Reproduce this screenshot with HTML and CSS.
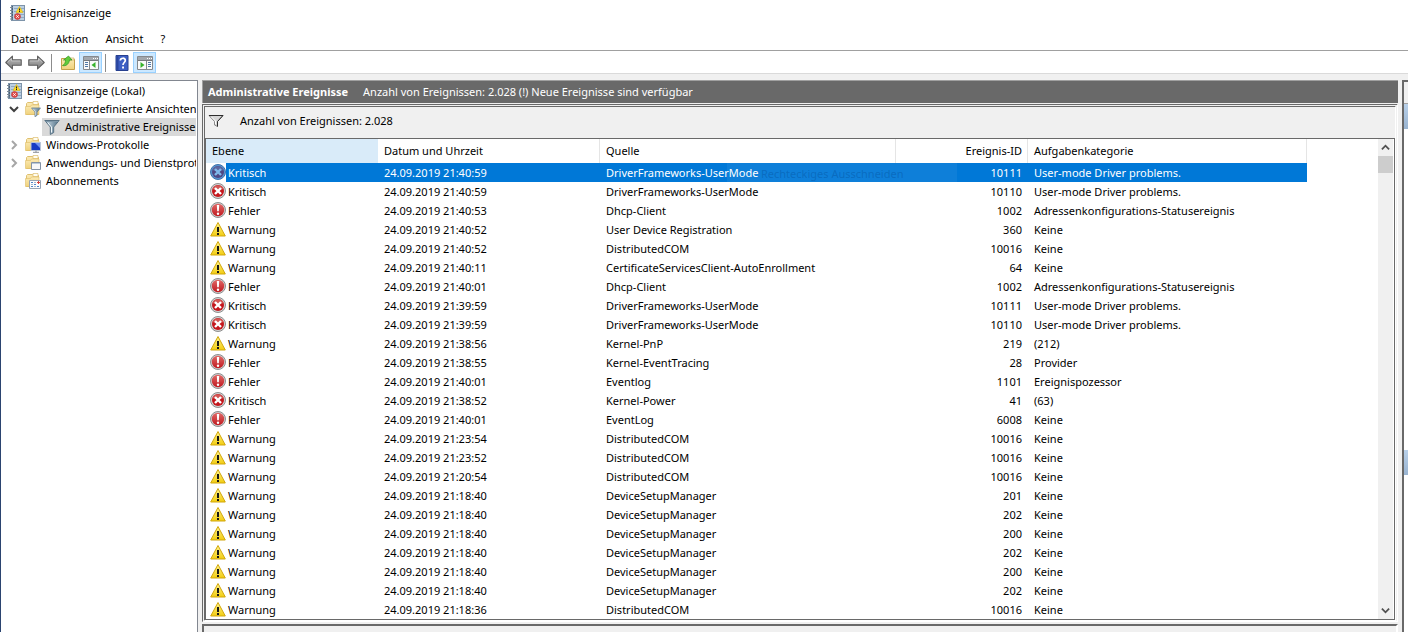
FILE: index.html
```html
<!DOCTYPE html>
<html lang="de">
<head>
    <meta charset="UTF-8">
    <meta name="viewport" content="width=device-width, initial-scale=1.0">
    <title>Ereignisanzeige</title>
    <link rel="stylesheet" href="styles.css">
</head>
<body>
    <svg class="sprite" aria-hidden="true">
        <defs>
            <linearGradient id="gYellow" x1="0" y1="0" x2="0" y2="1"><stop offset="0" stop-color="#fff48c"/><stop offset="1" stop-color="#f2cc10"/></linearGradient>
            <linearGradient id="gRed" x1="0" y1="0" x2="0" y2="1"><stop offset="0" stop-color="#e06a68"/><stop offset="1" stop-color="#c0181e"/></linearGradient>
            <linearGradient id="gFolder" x1="0" y1="0" x2="0" y2="1"><stop offset="0" stop-color="#fbeab5"/><stop offset="1" stop-color="#f0d27c"/></linearGradient>
            <linearGradient id="gArrow" x1="0" y1="0" x2="0" y2="1"><stop offset="0" stop-color="#bdbdbd"/><stop offset="1" stop-color="#7d7d7d"/></linearGradient>
            <linearGradient id="gFunnel" x1="0" y1="0" x2="1" y2="0"><stop offset="0" stop-color="#d3e2ec"/><stop offset="1" stop-color="#4d6d84"/></linearGradient>
        </defs>
        <symbol id="log" viewBox="0 0 16 16">
            <rect x="2.5" y="0.5" width="13" height="15" fill="#bccfe2" stroke="#7d93a9"/>
            <path d="M5 3.5h10M5 6.500h10M5 9.500h10M5 12.500h10" stroke="#8fa9c4"/>
            <path d="M3.500 1v14" stroke="#47617c"/>
            <path d="M1 2.500h3M1 5.500h3M1 8.500h3M1 11.500h3M1 14h3" stroke="#7c8792"/>
            <path d="M10.500 1.500l3.500 6H7z" fill="#ffd91f" stroke="#d9b21a" stroke-width=".6"/>
            <path d="M10.500 3.500v2M10.500 6v1" stroke="#222"/>
            <circle cx="8.500" cy="11.500" r="3" fill="#e04a48" stroke="#c03432" stroke-width=".6"/>
            <path d="M7.300 10.300l2.400 2.400M9.700 10.300l-2.400 2.400" stroke="#fff"/>
        </symbol>
        <symbol id="critical" viewBox="0 0 16 16">
            <circle cx="8" cy="8" r="7.500" fill="#d4d4d4" stroke="#8e8e8e"/>
            <circle cx="8" cy="8" r="6" fill="#c4161c"/>
            <path d="M2.500 6A5.900 5.900 0 0 1 13.500 6Q8 8.500 2.500 6" fill="#d35553"/>
            <path d="M5 5l6 6M11 5l-6 6" stroke="#fff" stroke-width="2.400"/>
        </symbol>
        <symbol id="criticalSelected" viewBox="0 0 16 16">
            <circle cx="8" cy="8" r="7.500" fill="#5a96d2" stroke="#3d72ab"/>
            <circle cx="8" cy="8" r="6" fill="#4f4783"/>
            <path d="M2.500 6A5.900 5.900 0 0 1 13.500 6Q8 8.500 2.500 6" fill="#5b669f"/>
            <path d="M5 5l6 6M11 5l-6 6" stroke="#7fb8ea" stroke-width="2.400"/>
        </symbol>
        <symbol id="error" viewBox="0 0 16 16">
            <circle cx="8" cy="8" r="7.500" fill="#d0d0d0" stroke="#8e8e8e"/>
            <circle cx="8" cy="8" r="6.200" fill="url(#gRed)"/>
            <path d="M6.800 3h2.400l-.4 6.200H7.200z" fill="#fff"/>
            <circle cx="8" cy="11.700" r="1.200" fill="#fff"/>
        </symbol>
        <symbol id="warning" viewBox="0 0 16 16">
            <path d="M8 1.500L15.300 15H.7z" fill="url(#gYellow)" stroke="#d1a60c" stroke-linejoin="round"/>
            <path d="M7 6h2v5H7zM7 12h2v2H7z" fill="#161616"/>
        </symbol>
        <symbol id="folder" viewBox="0 0 16 16">
            <path d="M1.500 13.500v-11l1-1h5l1 1h5v11z" fill="url(#gFolder)" stroke="#dfc070"/>
            <path d="M8 .500h5v3H8z" fill="#fffdf2" stroke="#d8b45a" stroke-width=".6"/>
            <path d="M.5 5.500h5l1-1.500h7.500v9.500H.5z" fill="url(#gFolder)" stroke="#dfbd66" stroke-width=".6"/>
        </symbol>
        <symbol id="funnel" viewBox="0 0 16 16">
            <path d="M.8 1.500h14.400L9.700 8v5.500l-3.400 2V8z" fill="url(#gFunnel)" stroke="#587183" stroke-linejoin="round"/>
            <path d="M1.500 2.500h13" stroke="#7f98aa"/>
            <path d="M4 4l3.500 4v5.500" fill="none" stroke="#f2f8fb"/>
        </symbol>
        <symbol id="folderFunnel" viewBox="0 0 16 16">
            <use href="#folder"/><use href="#funnel" x="6" y="6" width="10" height="10"/>
        </symbol>
        <symbol id="folderPc" viewBox="0 0 16 16">
            <use href="#folder"/>
            <path d="M6 5.500h9.500v8H6z" fill="#173bc4" stroke="#b9c4d6"/>
            <path d="M10 6h5v5z" fill="#6f92f0"/>
            <path d="M8 15.300h6M11 13.500v2" stroke="#8b8f98"/>
        </symbol>
        <symbol id="folderApp" viewBox="0 0 16 16">
            <use href="#folder"/>
            <path d="M6.500 7.500h9v7h-9z" fill="#f7f8fa" stroke="#8493a5"/>
            <path d="M7 8.500h8" stroke="#b8c9db"/>
        </symbol>
        <symbol id="folderSub" viewBox="0 0 16 16">
            <use href="#folder"/>
            <path d="M4.500 7.500h11v8h-11z" fill="#fbfcfe" stroke="#98a4b4"/>
            <path d="M6 9.500h2M9 11.500h2M6 13.500h2M12 13.500h2" stroke="#4f87c8"/>
            <path d="M6 11.500h2M9 9.500h2M9 13.500h2" stroke="#a9b6c6"/>
            <path d="M12 9.500h3M13.500 8v3" stroke="#d8423c"/>
        </symbol>
        <symbol id="back" viewBox="0 0 16 14">
            <path d="M.7 7L7 1v3.500h8.300v5H7V13z" fill="url(#gArrow)" stroke="#5e5e5e" stroke-linejoin="round"/>
            <path d="M2.500 6.500L6 3.300V5.500h8.300" fill="none" stroke="#d0d0d0" stroke-width=".7"/>
        </symbol>
        <symbol id="up" viewBox="0 0 16 16">
            <path d="M1.500 14.500v-11h6l1 1h6v10z" fill="url(#gFolder)" stroke="#c5a14a"/>
            <path d="M9 3h5v2H9z" fill="#fff8d8" stroke="#c5a14a" stroke-width=".6"/>
            <path d="M2.500 10.500C5 9.500 5.500 7 5.500 5H3.500L8.500 1l3.500 4H9.500C9 9 6 11.500 2.500 10.500z" fill="#62cc3c" stroke="#2d9320" stroke-width=".7"/>
        </symbol>
        <symbol id="pane" viewBox="0 0 16 14">
            <path d="M.5.500h15v13H.5z" fill="#fafafa" stroke="#85898e"/>
            <path d="M1 1h14v3H1z" fill="#a2a7ad"/>
            <path d="M10 2.500h1M12 2.500h1M14 2.500h1" stroke="#fff"/>
            <path d="M1 4.500h14" stroke="#75797e"/>
        </symbol>
        <symbol id="paneLeft" viewBox="0 0 16 14">
            <use href="#pane"/>
            <path d="M6.500 5v8" stroke="#85898e"/>
            <path d="M2 6.500h3M2 8.500h3M2 10.500h3" stroke="#4e78a8"/>
            <path d="M12.500 6v6L8.500 9z" fill="#38b32c"/>
        </symbol>
        <symbol id="paneRight" viewBox="0 0 16 14">
            <use href="#pane"/>
            <path d="M9.500 5v8" stroke="#85898e"/>
            <path d="M11 6.500h3M11 8.500h3M11 10.500h3" stroke="#4e78a8"/>
            <path d="M3.500 6v6l4-3z" fill="#38b32c"/>
        </symbol>
        <symbol id="help" viewBox="0 0 13 16">
            <path d="M.5.500h12v15H.5z" fill="#3d5fc4" stroke="#27408f"/>
            <path d="M1 1h2v14H1z" fill="#2a469e"/>
            <path d="M4.800 5.500C5 2.500 9.800 2.500 9.800 5.300 9.800 7.500 7.500 7.500 7.500 10" fill="none" stroke="#fff" stroke-width="1.700"/>
            <path d="M6.600 11.500h1.900v2H6.600z" fill="#fff"/>
        </symbol>
        <symbol id="filter" viewBox="0 0 16 12">
            <path d="M1 .5h14L9.500 6.500v5L6.500 10V6.500z" fill="#d6d6d6" stroke="#8a8a8a"/>
            <path d="M1 .5h14L9.500 6.500v5" fill="none" stroke="#2c2c2c"/>
            <path d="M3.500 2l4 4v3" fill="none" stroke="#fff"/>
        </symbol>
        <symbol id="chevron" viewBox="0 0 10 10">
            <path d="M1 3l4 4 4-4" fill="none" stroke="currentColor" stroke-width="2"/>
        </symbol>
    </svg>

    <div class="window">
        <header class="titlebar">
            <svg class="icon"><use href="#log"/></svg>
            <span>Ereignisanzeige</span>
        </header>

        <nav class="menubar">
            <button type="button">Datei</button>
            <button type="button">Aktion</button>
            <button type="button">Ansicht</button>
            <button type="button">?</button>
        </nav>

        <div class="toolbar">
            <button type="button" aria-label="Zurück"><svg class="arrow"><use href="#back"/></svg></button>
            <button type="button" aria-label="Vorwärts"><svg class="arrow flip"><use href="#back"/></svg></button>
            <span class="separator"></span>
            <button type="button" aria-label="Eine Ebene nach oben"><svg class="icon"><use href="#up"/></svg></button>
            <button type="button" class="active" aria-label="Konsolenstruktur"><svg class="pane-icon"><use href="#paneLeft"/></svg></button>
            <span class="separator"></span>
            <button type="button" aria-label="Hilfe"><svg class="icon"><use href="#help"/></svg></button>
            <button type="button" class="active" aria-label="Aktionsbereich"><svg class="pane-icon"><use href="#paneRight"/></svg></button>
        </div>

        <main class="workspace">
            <ul class="tree">
                <li class="root"><svg class="icon"><use href="#log"/></svg><span>Ereignisanzeige (Lokal)</span></li>
                <li><svg class="twisty open"><use href="#chevron"/></svg><svg class="icon"><use href="#folderFunnel"/></svg><span>Benutzerdefinierte Ansichten</span></li>
                <li class="child selected"><svg class="icon"><use href="#funnel"/></svg><span>Administrative Ereignisse</span></li>
                <li><svg class="twisty"><use href="#chevron"/></svg><svg class="icon"><use href="#folderPc"/></svg><span>Windows-Protokolle</span></li>
                <li><svg class="twisty"><use href="#chevron"/></svg><svg class="icon"><use href="#folderApp"/></svg><span>Anwendungs- und Dienstprotokolle</span></li>
                <li class="leaf"><svg class="icon"><use href="#folderSub"/></svg><span>Abonnements</span></li>
            </ul>

            <section class="content">
                <div class="content-title">
                    <h1>Administrative Ereignisse</h1>
                    <span>Anzahl von Ereignissen: 2.028 (!) Neue Ereignisse sind verfügbar</span>
                </div>
                <div class="panel">
                    <div class="filterbar">
                        <svg class="filter-icon"><use href="#filter"/></svg>
                        <span>Anzahl von Ereignissen: 2.028</span>
                    </div>
                    <div class="list">
                        <div class="table-wrap">
                            <table>
                                <colgroup>
                                    <col class="c-level"><col class="c-date"><col class="c-source"><col class="c-id"><col class="c-category"><col>
                                </colgroup>
                                <thead>
                                    <tr><th class="sorted">Ebene</th><th>Datum und Uhrzeit</th><th>Quelle</th><th class="num">Ereignis-ID</th><th>Aufgabenkategorie</th><td></td></tr>
                                </thead>
                                <tbody id="events"></tbody>
                            </table>
                            <div class="ghost">Rechteckiges Ausschneiden</div>
                        </div>
                        <div class="scrollbar">
                            <button type="button" aria-label="Nach oben"><svg class="up"><use href="#chevron"/></svg></button>
                            <div class="thumb"></div>
                            <button type="button" class="down" aria-label="Nach unten"><svg><use href="#chevron"/></svg></button>
                        </div>
                    </div>
                </div>
                <div class="preview"></div>
            </section>

            <aside class="actions">
                <div class="actions-title"></div>
                <div class="actions-group"></div>
                <div class="actions-group"></div>
            </aside>
        </main>
    </div>

    <script>
        const icons = { Kritisch: 'critical', Fehler: 'error', Warnung: 'warning' };

        const events = [
            ['Kritisch', '21:40:59', 'DriverFrameworks-UserMode', 10111, 'User-mode Driver problems.'],
            ['Kritisch', '21:40:59', 'DriverFrameworks-UserMode', 10110, 'User-mode Driver problems.'],
            ['Fehler', '21:40:53', 'Dhcp-Client', 1002, 'Adressenkonfigurations-Statusereignis'],
            ['Warnung', '21:40:52', 'User Device Registration', 360, 'Keine'],
            ['Warnung', '21:40:52', 'DistributedCOM', 10016, 'Keine'],
            ['Warnung', '21:40:11', 'CertificateServicesClient-AutoEnrollment', 64, 'Keine'],
            ['Fehler', '21:40:01', 'Dhcp-Client', 1002, 'Adressenkonfigurations-Statusereignis'],
            ['Kritisch', '21:39:59', 'DriverFrameworks-UserMode', 10111, 'User-mode Driver problems.'],
            ['Kritisch', '21:39:59', 'DriverFrameworks-UserMode', 10110, 'User-mode Driver problems.'],
            ['Warnung', '21:38:56', 'Kernel-PnP', 219, '(212)'],
            ['Fehler', '21:38:55', 'Kernel-EventTracing', 28, 'Provider'],
            ['Fehler', '21:40:01', 'Eventlog', 1101, 'Ereignispozessor'],
            ['Kritisch', '21:38:52', 'Kernel-Power', 41, '(63)'],
            ['Fehler', '21:40:01', 'EventLog', 6008, 'Keine'],
            ['Warnung', '21:23:54', 'DistributedCOM', 10016, 'Keine'],
            ['Warnung', '21:23:52', 'DistributedCOM', 10016, 'Keine'],
            ['Warnung', '21:20:54', 'DistributedCOM', 10016, 'Keine'],
            ['Warnung', '21:18:40', 'DeviceSetupManager', 201, 'Keine'],
            ['Warnung', '21:18:40', 'DeviceSetupManager', 202, 'Keine'],
            ['Warnung', '21:18:40', 'DeviceSetupManager', 200, 'Keine'],
            ['Warnung', '21:18:40', 'DeviceSetupManager', 202, 'Keine'],
            ['Warnung', '21:18:40', 'DeviceSetupManager', 200, 'Keine'],
            ['Warnung', '21:18:40', 'DeviceSetupManager', 202, 'Keine'],
            ['Warnung', '21:18:36', 'DistributedCOM', 10016, 'Keine']
        ];

        document.getElementById('events').innerHTML = events.map(([level, time, source, id, category], i) => `
            <tr${i === 0 ? ' class="selected"' : ''}>
                <td class="level"><div><svg class="icon"><use href="#${icons[level]}${i === 0 ? 'Selected' : ''}"/></svg><span>${level}</span></div></td>
                <td>24.09.2019 ${time}</td>
                <td>${source}</td>
                <td class="num">${id}</td>
                <td>${category}</td>
                <td class="rest"></td>
            </tr>
        `).join('');
    </script>
</body>
</html>
```

FILE: styles.css
```css
:root {
    --face: #f0f0f0;
    --shadow: #a0a0a0;
    --dark: #696969;
    --accent: #0078d7;
    --hover: #cce8ff;
}
* { box-sizing: border-box; }
html, body { height: 100%; }
body {
    margin: 0;
    font-family: "Noto Sans", "Open Sans", sans-serif;
    font-size: 11px;
    line-height: 18px;
    color: #000;
    background: #fff;
    overflow: hidden;
}
button {
    font: inherit;
    color: inherit;
    background: none;
    border: 0;
    padding: 0;
}
svg { display: block; flex: none; }
.sprite { position: absolute; width: 0; height: 0; }
.icon { width: 16px; height: 16px; }

.window {
    display: flex;
    flex-direction: column;
    height: 100%;
    border-left: 1px solid #2b4470;
}
.titlebar {
    display: flex;
    align-items: center;
    gap: 5px;
    height: 26px;
    padding-left: 8px;
}
.menubar {
    display: flex;
    align-items: center;
    gap: 17px;
    height: 25px;
    padding: 2px 0 0 10px;
    border-bottom: 1px solid var(--shadow);
}
.toolbar {
    display: flex;
    align-items: flex-end;
    height: 23px;
    padding-left: 1px;
    border-bottom: 1px solid #dadada;
}
.toolbar button {
    display: flex;
    align-items: center;
    justify-content: center;
    width: 23px;
    height: 21px;
}
.toolbar .active { background: var(--hover); border: 1px solid #99d1ff; }
.arrow { width: 17px; height: 15px; }
.flip { transform: scaleX(-1); }
.pane-icon { width: 16px; height: 14px; }
.separator { width: 1px; height: 18px; margin: 0 4px 1px 3px; background: #8c8c8c; }

.workspace {
    display: flex;
    flex: 1;
    gap: 4px;
    min-height: 0;
    padding-top: 6px;
    background: var(--face);
}
.tree {
    flex: none;
    width: 197px;
    margin: 0;
    padding: 1px 1px 0 1px;
    list-style: none;
    background: #fff;
    border: 1px solid #828790;
    border-left: 0;
    border-bottom: 0;
}
.tree li {
    display: flex;
    align-items: center;
    gap: 5px;
    height: 18px;
    padding-left: 7px;
    white-space: nowrap;
    overflow: hidden;
}
.tree .root { padding-left: 4px; }
.tree .leaf { padding-left: 23px; }
.tree .child { margin-left: 40px; padding-left: 2px; }
.tree .selected { background: #d9d9d9; }
.twisty { width: 10px; height: 10px; margin-right: 1px; color: #a6a6a6; transform: rotate(-90deg); }
.twisty.open { color: #404040; transform: none; }

.content {
    display: flex;
    flex: 1;
    flex-direction: column;
    min-width: 0;
}
.content-title {
    display: flex;
    align-items: center;
    gap: 15px;
    height: 23px;
    padding-left: 5px;
    color: #fff;
    background: var(--dark);
    border-top: 1px solid var(--shadow);
    border-left: 1px solid var(--shadow);
    white-space: nowrap;
}
.content-title h1 { margin: 0; font-size: 11px; font-weight: 700; }
.panel {
    margin-top: 1px;
    border: 3px double var(--dark);
    border-right-color: #fff;
    border-bottom: 2px solid #fff;
}
.filterbar {
    display: flex;
    align-items: center;
    gap: 16px;
    height: 31px;
    padding: 0 0 3px 3px;
}
.filter-icon { width: 16px; height: 12px; }
.list {
    display: flex;
    background: #fff;
    border: 1px solid var(--dark);
}
.table-wrap { position: relative; flex: 1; min-width: 0; }
table {
    width: 100%;
    table-layout: fixed;
    border-collapse: separate;
    border-spacing: 0;
}
.c-level { width: 172px; }
.c-date { width: 222px; }
.c-source { width: 296px; }
.c-id { width: 132px; }
.c-category { width: 279px; }
th {
    height: 24px;
    padding: 0 5px 0 6px;
    font-weight: 400;
    text-align: left;
    border-right: 1px solid #e5e5e5;
}
th.sorted { background: #d9ebf9; border-color: #d9ebf9; }
td { height: 19px; padding: 0 6px; white-space: nowrap; }
.num { text-align: right; }
td.level { padding: 0 0 0 4px; }
.level div { display: flex; height: 19px; }
.level .icon { margin-top: 1px; }
.level span { flex: 1; padding-left: 2px; line-height: 19px; }
.selected td { color: #fff; background: var(--accent); }
.selected .level { background: none; }
.selected .level span { background: var(--accent); }
.selected .rest { background: none; }
.ghost {
    position: absolute;
    top: 24px;
    left: 521px;
    width: 230px;
    height: 22px;
    padding-left: 34px;
    line-height: 22px;
    color: rgba(0, 60, 130, 0.3);
    background: rgba(240, 248, 255, 0.06);
    white-space: nowrap;
    pointer-events: none;
}

.scrollbar {
    display: flex;
    flex-direction: column;
    flex: none;
    width: 16px;
    background: var(--face);
    border-right: 1px solid #fff;
}
.scrollbar button {
    display: grid;
    place-items: center;
    height: 17px;
    color: #505050;
}
.scrollbar svg { width: 9px; height: 9px; }
.scrollbar .up { transform: rotate(180deg); }
.scrollbar .down { margin-top: auto; }
.thumb { height: 17px; background: #cdcdcd; }

.preview {
    flex: 1;
    margin-top: 2px;
    border: 2px solid var(--dark);
    border-right-color: #fff;
    border-bottom: 0;
}
.actions {
    flex: none;
    width: 6px;
    background: #fff;
    border: 2px solid var(--dark);
    border-right: 0;
    border-bottom: 0;
}
.actions-title { height: 22px; background: var(--face); border-bottom: 1px solid var(--shadow); }
.actions-group { height: 25px; background: linear-gradient(#b9d1ea, #99b4d1); }
.actions-group + .actions-group { margin-top: 321px; }
```
